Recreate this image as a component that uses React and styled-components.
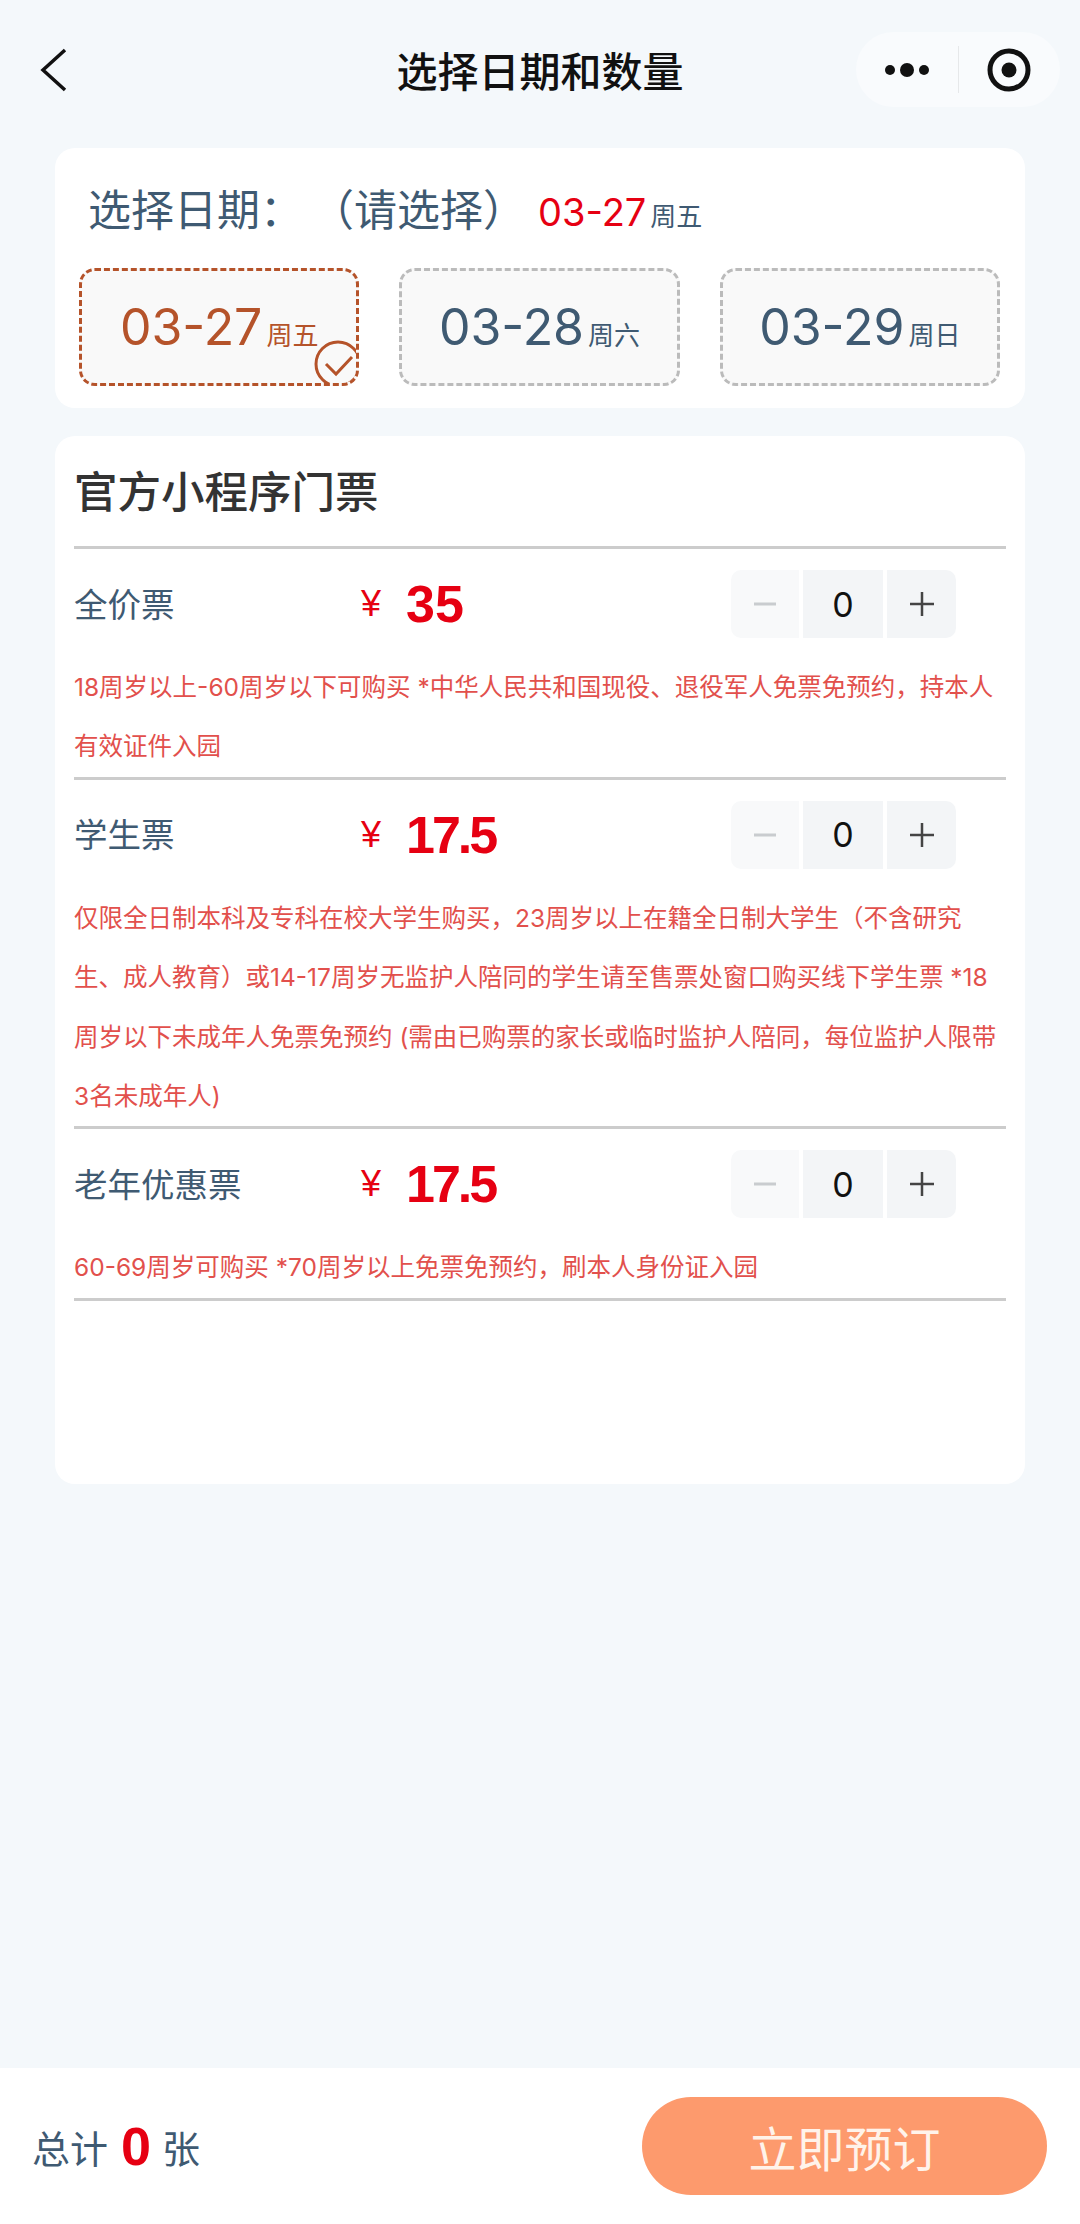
import React from 'react'
import styled, { createGlobalStyle } from 'styled-components'

const CJK = '"Noto Sans CJK SC", sans-serif'
const DIGITS = 'Inter, "Noto Sans CJK SC", sans-serif'
const ARIAL = '"Liberation Sans", "Noto Sans CJK SC", sans-serif'
const SLATE = '#3f5a72'
const RED = '#e60012'
const RUST = '#b5532a'

const Global = createGlobalStyle`
  html, body { margin: 0; padding: 0; background: #f4f8fb; }
  * { box-sizing: border-box; }
  body { font-family: ${CJK}; }
`

const Page = styled.div`
  min-height: 100vh;
  display: flex;
  flex-direction: column;
  background: #f4f8fb;
`
const Nav = styled.header`
  height: 148px;
  padding: 32px 20px 0;
  display: grid;
  grid-template-columns: 1fr auto 1fr;
  align-items: start;
`
const Back = styled.svg`
  display: block;
  margin: 14px 0 0 20px;
  width: 28px;
  height: 48px;
`
const Title = styled.h1`
  margin: 0;
  font-size: 41px;
  line-height: 74px;
  font-weight: 500;
  color: #111;
`
const Capsule = styled.div`
  justify-self: end;
  width: 204px;
  height: 75px;
  border-radius: 38px;
  background: #f9fbfd;
  display: flex;
  align-items: center;
`
const CapsuleHalf = styled.div`
  flex: 1;
  display: flex;
  align-items: center;
  justify-content: center;
`
const CapsuleDivider = styled.div`
  width: 1px;
  height: 47px;
  background: #e6e8ea;
`
const Main = styled.main`
  flex: 1;
  padding: 0 55px;
  display: flex;
  flex-direction: column;
  gap: 28px;
`
const Card = styled.section`
  background: #fff;
  border-radius: 20px;
`
const DateCard = styled(Card)`
  padding: 34px 25px 22px 24px;
`
const SelectRow = styled.div`
  height: 50px;
  margin-bottom: 36px;
  padding-left: 9px;
  display: flex;
  align-items: baseline;
  font-size: 43px;
  line-height: 50px;
  color: ${SLATE};
`
const Hint = styled.span`
  margin-left: 8px;
`
const Picked = styled.span`
  margin-left: 12px;
  font-family: ${DIGITS};
  font-size: 38px;
  color: ${RED};
`
const Week = styled.span`
  font-family: ${CJK};
  font-size: 26px;
  color: ${props => props.color || SLATE};
  margin-left: 4px;
`
const DateGrid = styled.div`
  display: grid;
  grid-template-columns: repeat(3, 1fr);
  gap: 40px;
`
const DateCell = styled.div`
  position: relative;
  height: 118px;
  overflow: hidden;
  border: 3px dashed ${props => (props.$active ? RUST : '#bbbbbb')};
  border-radius: 16px;
  background: #f9f9f9;
  display: flex;
  align-items: baseline;
  justify-content: center;
  padding-top: 27px;
  color: ${props => (props.$active ? RUST : SLATE)};
`
const DateNum = styled.span`
  font-family: ${DIGITS};
  font-size: 50px;
  line-height: 58px;
`
const Check = styled.svg`
  position: absolute;
  right: -7px;
  bottom: -6px;
  width: 50px;
  height: 50px;
`
const TicketCard = styled(Card)`
  padding: 0 19px 183px;
`
const Heading = styled.h2`
  margin: 0;
  height: 113px;
  padding-top: 24px;
  font-size: 43.5px;
  line-height: 60px;
  font-weight: 500;
  color: #333;
  border-bottom: 3px solid #cccccc;
`
const Ticket = styled.div`
  padding-top: 21px;
  border-bottom: 3px solid #cccccc;
`
const TicketHead = styled.div`
  display: grid;
  grid-template-columns: 287px 370px auto;
  align-items: center;
  margin-bottom: 20px;
`
const TicketName = styled.div`
  margin-bottom: 4px;
  font-size: 33.5px;
  color: ${SLATE};
`
const Price = styled.div`
  display: flex;
  align-items: center;
  font-family: ${ARIAL};
  color: ${RED};
`
const Yen = styled.span`
  width: 45px;
  font-size: 36px;
`
const Amount = styled.span`
  font-size: 52px;
  font-weight: 700;
  letter-spacing: ${props => props.$tight ? '-3px' : '0'};
`
const Stepper = styled.div`
  display: flex;
  gap: 4px;
  height: 68px;
`
const StepBtn = styled.div`
  width: ${props => props.width}px;
  display: flex;
  align-items: center;
  justify-content: center;
  background: ${props => props.bg || '#f3f5f7'};
  border-radius: ${props => props.radius || '0'};
  font-family: ${DIGITS};
  font-size: 34px;
  color: #111;
`
const Desc = styled.p`
  margin: 0;
  font-family: ${DIGITS};
  font-size: 24.5px;
  line-height: 59.4px;
  color: #e2504c;
  white-space: nowrap;
`
const Footer = styled.footer`
  height: 156px;
  background: #fff;
  padding: 0 33px 0 32px;
  display: flex;
  align-items: center;
  justify-content: space-between;
`
const Total = styled.div`
  display: flex;
  align-items: center;
  font-size: 38px;
  color: ${SLATE};
`
const TotalNum = styled.span`
  margin: 0 11px 0 13px;
  font-family: ${ARIAL};
  font-size: 54px;
  font-weight: 700;
  color: ${RED};
`
const Book = styled.button`
  width: 405px;
  height: 98px;
  border: 0;
  border-radius: 49px;
  background: #fd9a6d;
  color: #fff3ea;
  font-family: ${CJK};
  font-size: 48px;
`

const dates = [
  { day: '03-27', week: '周五', active: true },
  { day: '03-28', week: '周六' },
  { day: '03-29', week: '周日' },
]

const tickets = [
  {
    name: '全价票',
    price: '35',
    lines: [
      '18周岁以上-60周岁以下可购买 *中华人民共和国现役、退役军人免票免预约，持本人',
      '有效证件入园',
    ],
  },
  {
    name: '学生票',
    price: '17.5',
    lines: [
      '仅限全日制本科及专科在校大学生购买，23周岁以上在籍全日制大学生（不含研究',
      '生、成人教育）或14-17周岁无监护人陪同的学生请至售票处窗口购买线下学生票 *18',
      '周岁以下未成年人免票免预约 (需由已购票的家长或临时监护人陪同，每位监护人限带',
      '3名未成年人)',
    ],
  },
  {
    name: '老年优惠票',
    price: '17.5',
    lines: ['60-69周岁可购买 *70周岁以上免票免预约，刷本人身份证入园'],
  },
]

const QtyStepper = () => (
  <Stepper>
    <StepBtn width={68} bg="#f8f9fa" radius="10px 0 0 10px">
      <svg width="24" height="4" viewBox="0 0 24 4"><path d="M1 2h22" stroke="#c9cccf" strokeWidth="3" /></svg>
    </StepBtn>
    <StepBtn width={80}>0</StepBtn>
    <StepBtn width={69} radius="0 10px 10px 0">
      <svg width="24" height="24" viewBox="0 0 24 24"><path d="M0 12h24M12 0v24" stroke="#444" strokeWidth="2.5" /></svg>
    </StepBtn>
  </Stepper>
)

export default function App() {
  return (
    <Page>
      <Global />
      <Nav>
        <Back viewBox="0 0 28 48">
          <path d="M25 4 3 24l22 20" fill="none" stroke="#111" strokeWidth="3.5" />
        </Back>
        <Title>选择日期和数量</Title>
        <Capsule>
          <CapsuleHalf>
            <svg width="46" height="16" viewBox="0 0 46 16">
              <circle cx="6" cy="8" r="5" fill="#111" />
              <circle cx="23" cy="8" r="7" fill="#111" />
              <circle cx="40" cy="8" r="5" fill="#111" />
            </svg>
          </CapsuleHalf>
          <CapsuleDivider />
          <CapsuleHalf>
            <svg width="46" height="46" viewBox="0 0 46 46">
              <circle cx="23" cy="23" r="19" fill="none" stroke="#111" strokeWidth="5" />
              <circle cx="23" cy="23" r="7.5" fill="#111" />
            </svg>
          </CapsuleHalf>
        </Capsule>
      </Nav>
      <Main>
        <DateCard>
          <SelectRow>
            选择日期：<Hint>（请选择）</Hint>
            <Picked>03-27<Week>周五</Week></Picked>
          </SelectRow>
          <DateGrid>
            {dates.map(d => (
              <DateCell key={d.day} $active={d.active}>
                <DateNum>{d.day}</DateNum>
                <Week color={d.active ? RUST : SLATE}>{d.week}</Week>
                {d.active && (
                  <Check viewBox="0 0 50 50">
                    <circle cx="25" cy="25" r="22" fill="none" stroke={RUST} strokeWidth="3" />
                    <path d="M13 25l10 10 16-17" fill="none" stroke={RUST} strokeWidth="3" />
                  </Check>
                )}
              </DateCell>
            ))}
          </DateGrid>
        </DateCard>
        <TicketCard>
          <Heading>官方小程序门票</Heading>
          {tickets.map(t => (
            <Ticket key={t.name}>
              <TicketHead>
                <TicketName>{t.name}</TicketName>
                <Price>
                  <Yen>¥</Yen>
                  <Amount $tight={t.price.length > 2}>{t.price}</Amount>
                </Price>
                <QtyStepper />
              </TicketHead>
              <Desc>
                {t.lines.map((line, i) => (
                  <React.Fragment key={i}>{i > 0 && <br />}{line}</React.Fragment>
                ))}
              </Desc>
            </Ticket>
          ))}
        </TicketCard>
      </Main>
      <Footer>
        <Total>总计<TotalNum>0</TotalNum>张</Total>
        <Book>立即预订</Book>
      </Footer>
    </Page>
  )
}
